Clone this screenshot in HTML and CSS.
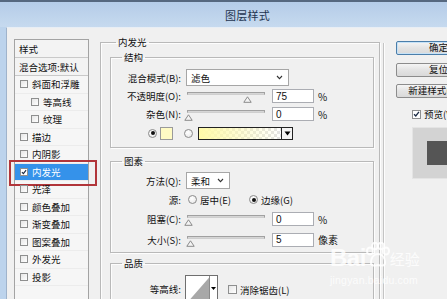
FILE: index.html
```html
<!DOCTYPE html>
<html lang="zh-CN">
<head>
<meta charset="utf-8">
<title>图层样式</title>
<link rel="stylesheet" href="styles.css">
</head>
<body>
<div class="titlebar"><span class="title">图层样式</span></div>
<div class="frame">
  <div class="content">
    <div class="stylelist">
      <div class="hdr">样式</div>
      <div class="hdr">混合选项:默认</div>
      <div class="item"><span class="cb"></span>斜面和浮雕</div>
      <div class="item sub"><span class="cb"></span>等高线</div>
      <div class="item sub"><span class="cb"></span>纹理</div>
      <div class="item"><span class="cb"></span>描边</div>
      <div class="item"><span class="cb"></span>内阴影</div>
      <div class="item selected"><span class="cb checked"><svg viewBox="0 0 8 8" width="8" height="8"><path d="M1.2 4.2 L3.2 6.2 L6.8 1.6" fill="none" stroke="#1a2a44" stroke-width="1.5"/></svg></span>内发光<span class="mark"></span></div>
      <div class="item"><span class="cb"></span>光泽</div>
      <div class="item"><span class="cb"></span>颜色叠加</div>
      <div class="item"><span class="cb"></span>渐变叠加</div>
      <div class="item"><span class="cb"></span>图案叠加</div>
      <div class="item"><span class="cb"></span>外发光</div>
      <div class="item"><span class="cb"></span>投影</div>
    </div>

    <fieldset class="group outer">
      <legend>内发光</legend>

      <fieldset class="group inner g-struct">
        <legend>结构</legend>
        <div class="row r19">
          <span class="lbl">混合模式(B):</span>
          <span class="select w-blend">滤色<svg class="chev" viewBox="0 0 7 5" width="7" height="5"><path d="M1 1 L3.5 3.6 L6 1" fill="none" stroke="#333" stroke-width="1.1"/></svg></span>
        </div>
        <div class="row r18">
          <span class="lbl">不透明度(O):</span>
          <span class="slider"><span class="track"></span><svg class="thumb" style="left:75%" viewBox="0 0 9 7" width="9" height="7"><path d="M4.5 0.8 L8.2 6.3 L0.8 6.3 Z" fill="#f4f4f4" stroke="#8a8a8a" stroke-width="1"/></svg></span>
          <span class="num">75</span><span class="unit">%</span>
        </div>
        <div class="row r18">
          <span class="lbl">杂色(N):</span>
          <span class="slider"><span class="track"></span><svg class="thumb" style="left:0%" viewBox="0 0 9 7" width="9" height="7"><path d="M4.5 0.8 L8.2 6.3 L0.8 6.3 Z" fill="#f4f4f4" stroke="#8a8a8a" stroke-width="1"/></svg></span>
          <span class="num">0</span><span class="unit">%</span>
        </div>
        <div class="row r20 colorrow">
          <span class="radio on"></span>
          <span class="swatch"></span>
          <span class="radio r-grad"></span>
          <span class="gradient"><span class="gfill"></span><span class="gbtn"><svg viewBox="0 0 7 5" width="7" height="5"><path d="M0.5 0.5 L6.5 0.5 L3.5 4.5 Z" fill="#000"/></svg></span></span>
        </div>
      </fieldset>

      <fieldset class="group inner g-elem">
        <legend>图素</legend>
        <div class="row r19">
          <span class="lbl">方法(Q):</span>
          <span class="select w-method">柔和<svg class="chev" viewBox="0 0 7 5" width="7" height="5"><path d="M1 1 L3.5 3.6 L6 1" fill="none" stroke="#333" stroke-width="1.1"/></svg></span>
        </div>
        <div class="row r19">
          <span class="lbl">源:</span>
          <span class="radio r-src"></span><span class="rtext">居中(E)</span>
          <span class="radio on r-src2"></span><span class="rtext">边缘(G)</span>
        </div>
        <div class="row r20">
          <span class="lbl">阻塞(C):</span>
          <span class="slider"><span class="track"></span><svg class="thumb" style="left:0%" viewBox="0 0 9 7" width="9" height="7"><path d="M4.5 0.8 L8.2 6.3 L0.8 6.3 Z" fill="#f4f4f4" stroke="#8a8a8a" stroke-width="1"/></svg></span>
          <span class="num">0</span><span class="unit">%</span>
        </div>
        <div class="row r21">
          <span class="lbl">大小(S):</span>
          <span class="slider"><span class="track"></span><svg class="thumb" style="left:2%" viewBox="0 0 9 7" width="9" height="7"><path d="M4.5 0.8 L8.2 6.3 L0.8 6.3 Z" fill="#f4f4f4" stroke="#8a8a8a" stroke-width="1"/></svg></span>
          <span class="num">5</span><span class="unit">像素</span>
        </div>
      </fieldset>

      <fieldset class="group inner g-qual">
        <legend>品质</legend>
        <div class="row qrow">
          <span class="lbl">等高线:</span>
          <span class="contour"><span class="cthumb"><svg viewBox="0 0 23 30" width="23" height="30" preserveAspectRatio="none"><path d="M0 30 L23 2 L23 30 Z" fill="#a8a8a8"/></svg></span><span class="cbtn"><svg viewBox="0 0 5 3" width="5" height="3"><path d="M0 0 L5 0 L2.5 3 Z" fill="#000"/></svg></span></span>
          <span class="cb aa"></span><span class="rtext">消除锯齿(L)</span>
        </div>
      </fieldset>
    </fieldset>

    <div class="divider"></div>

    <div class="side">
      <div class="btn default">确定</div>
      <div class="btn b2">复位</div>
      <div class="btn b3">新建样式(W)...</div>
      <div class="preview-check"><span class="cb checked"><svg viewBox="0 0 8 8" width="8" height="8"><path d="M1.2 4.2 L3.2 6.2 L6.8 1.6" fill="none" stroke="#1a2a44" stroke-width="1.5"/></svg></span>预览(V)</div>
      <div class="preview"><span class="pv-square"></span></div>
    </div>
  </div>
</div>

<div class="watermark">
  <div class="wm-top"><span class="wm-bai">Bai</span><svg class="wm-paw" viewBox="0 0 26 26" width="26" height="26"><g fill="none" stroke="rgba(255,255,255,0.85)" stroke-width="2"><ellipse cx="6" cy="9" rx="3" ry="3.6"/><ellipse cx="11" cy="4" rx="2.8" ry="3.3"/><ellipse cx="17" cy="4" rx="2.8" ry="3.3"/><ellipse cx="22" cy="9" rx="3" ry="3.6"/><path d="M7 21 C7 14 11 12 14 12 C17 12 21 14 21 21 C21 24 18 24 14 23 C10 24 7 24 7 21 Z"/></g></svg><span class="wm-jy">经验</span></div>
  <div class="wm-url">jingyan.baidu.com</div>
</div>
</body>
</html>
```

FILE: styles.css
```css
* { box-sizing: border-box; margin: 0; padding: 0; }
html, body { width: 447px; height: 299px; overflow: hidden; }
body {
  font-family: "Noto Sans CJK SC", "Liberation Sans", sans-serif;
  font-size: 9.5px;
  color: #111;
  background: #bcd3ec;
  position: relative;
}

.titlebar {
  height: 27px;
  border-top: 2px solid #56687f;
  background: linear-gradient(#b5cce8, #c6daef);
  display: flex;
  justify-content: center;
  align-items: center;
  padding-left: 48px;
}
.title { font-size: 11px; color: #1e3450; letter-spacing: 0.3px; }

.frame { height: 272px; padding-left: 6px; display: flex; }
.content {
  flex: 1;
  background: #f0f0f0;
  border-left: 1px solid #9fb3cb;
  border-top: 1px solid #e8eef5;
  display: flex;
  align-items: flex-start;
  overflow: hidden;
}

/* style list */
.stylelist {
  margin: 11px 0 0 7px;
  width: 75px;
  height: 270px;
  flex: none;
  border: 1px solid #a3a3a3;
  background: #f6f6f6;
}
.hdr {
  height: 18px;
  border-bottom: 1px solid #c9c9c9;
  padding-left: 4px;
  display: flex;
  align-items: center;
  background: #f3f3f3;
}
.item {
  height: 17.5px;
  display: flex;
  align-items: center;
  padding-left: 5px;
  border-bottom: 1px solid #ececec;
  position: relative;
}
.item.sub { padding-left: 16px; }
.cb {
  width: 8px;
  height: 8px;
  border: 1px solid #8e8f8f;
  background: linear-gradient(135deg, #e6e6e6, #ffffff);
  margin-right: 4px;
  flex: none;
  display: inline-flex;
  align-items: center;
  justify-content: center;
}
.cb.checked { background: #fff; }
.cb svg { display: block; }
.item.selected { background: #3592ea; color: #fff; }
.mark {
  position: absolute;
  left: -6px;
  top: -4px;
  right: -9px;
  bottom: -6px;
  border: 2px solid #b1353a;
}

/* fieldsets */
.group {
  border: 1px solid #b9b9b9;
  box-shadow: inset 1px 1px 0 #fdfdfd, 1px 1px 0 #fdfdfd;
}
.group legend {
  line-height: 12px;
  padding: 0 2px;
}
.outer {
  margin: 8px 0 0 11px;
  width: 280px;
  height: 300px;
  padding: 3px 5px 0 9px;
  flex: none;
}
.outer > legend { margin-left: 6px; }
.inner { width: 264px; padding: 0; }
.inner > legend { margin-left: 11px; }
.g-struct { padding: 5px 0 4px 0; }
.g-elem { margin-top: 7px; padding: 4px 0 2px 0; }
.g-qual { margin-top: 4px; padding: 6px 0 0 0; height: 60px; }

.row { display: flex; align-items: center; }
.r18 { height: 18px; }
.r19 { height: 19px; }
.r20 { height: 20px; }
.r21 { height: 21px; }
.lbl { width: 70px; text-align: right; margin-right: 5px; flex: none; white-space: nowrap; }

.select {
  height: 17px;
  border: 1px solid #a6a6a6;
  background: #fff;
  display: flex;
  align-items: center;
  justify-content: space-between;
  padding: 0 5px 0 4px;
}
.w-blend { width: 103px; }
.w-method { width: 44px; }
.chev { display: block; }

.slider { position: relative; width: 78px; height: 18px; margin-left: 1px; flex: none; }
.track {
  display: block;
  margin-top: 5px;
  height: 3px;
  border: 1px solid #a1a1a1;
  border-bottom-color: #cfcfcf;
  background: #d6d6d6;
}
.thumb { position: absolute; top: 9px; margin-left: -3px; display: block; }

.num {
  margin-left: 7px;
  width: 42px;
  height: 14px;
  border: 1px solid #abadb3;
  background: #fff;
  padding-left: 3px;
  display: flex;
  align-items: center;
  font-size: 10px;
  font-family: "Liberation Sans", sans-serif;
}
.unit { margin-left: 4px; font-size: 10px; }

.colorrow { padding-left: 37px; }
.radio {
  width: 9px;
  height: 9px;
  border-radius: 50%;
  border: 1px solid #8b8b8b;
  background: radial-gradient(circle at 40% 35%, #fff, #e4e4e4);
  flex: none;
  display: inline-block;
  position: relative;
}
.radio.on::after {
  content: "";
  position: absolute;
  left: 1.5px;
  top: 1.5px;
  width: 4px;
  height: 4px;
  border-radius: 50%;
  background: #111;
}
.swatch {
  margin-left: 3px;
  width: 13px;
  height: 13px;
  border: 1px solid #9a9a9a;
  background: #fffbc4;
}
.r-grad { margin-left: 11px; }
.gradient {
  margin-left: 5px;
  width: 95px;
  height: 13px;
  border: 1px solid #222;
  display: flex;
  background-color: #fff;
  background-image:
    linear-gradient(45deg, #e4e4e4 25%, transparent 25%, transparent 75%, #e4e4e4 75%),
    linear-gradient(45deg, #e4e4e4 25%, transparent 25%, transparent 75%, #e4e4e4 75%);
  background-size: 6px 6px;
  background-position: 0 0, 3px 3px;
}
.gfill { flex: 1; background: linear-gradient(90deg, #fffaa8, rgba(255, 250, 170, 0)); }
.gbtn {
  width: 11px;
  border-left: 1px solid #222;
  background: #f4f4f4;
  display: flex;
  align-items: center;
  justify-content: center;
}
.gbtn svg { display: block; }

.r-src { margin-left: 2px; }
.rtext { margin-left: 3px; white-space: nowrap; }
.r-src2 { margin-left: 18px; }

.qrow { align-items: flex-start; height: 40px; }
.qrow .lbl { margin-top: 7px; }
.contour {
  margin-left: -1px;
  width: 33px;
  height: 30px;
  border: 1px solid #6f6f6f;
  background: #fff;
  display: flex;
}
.cthumb { width: 23px; height: 100%; overflow: hidden; }
.cthumb svg { display: block; width: 100%; height: 100%; }
.cbtn {
  flex: 1;
  border-left: 1px solid #8a8a8a;
  display: flex;
  align-items: center;
  justify-content: center;
  padding-bottom: 4px;
}
.cbtn svg { display: block; }
.cb.aa { margin-left: 10px; margin-top: 10px; width: 9px; height: 9px; margin-right: 0; }
.qrow .rtext { margin-top: 8px; }

.divider {
  width: 1px;
  height: 300px;
  margin: 15px 0 0 3px;
  background: #c4c4c4;
  box-shadow: 1px 0 0 #fdfdfd;
  flex: none;
}

.side { margin: 13px 0 0 12px; width: 90px; flex: none; }
.btn {
  width: 85px;
  height: 14px;
  border: 1px solid #8c8c8c;
  border-radius: 2px;
  background: linear-gradient(#f5f5f5, #e3e3e3 50%, #d9d9d9);
  display: flex;
  align-items: center;
  justify-content: center;
  line-height: 1;
}
.btn.default { border-color: #4b7eaa; box-shadow: inset 0 0 0 1px #c6e2f7; }
.b2 { margin-top: 8px; }
.b3 { margin-top: 7px; }
.preview-check { margin: 9px 0 0 16px; display: flex; align-items: center; }
.preview-check .cb { width: 9px; height: 9px; margin-right: 3px; }
.preview {
  margin: 6px 0 0 16px;
  width: 60px;
  height: 52px;
  background: #d3d3d3;
  border: 1px solid #e4e4e4;
  display: flex;
  align-items: center;
  padding-left: 14px;
}
.pv-square { width: 32px; height: 24px; background: #555; display: block; }

/* watermark overlay */
.watermark {
  position: absolute;
  left: 330px;
  top: 244px;
  color: rgba(255, 255, 255, 0.82);
  pointer-events: none;
}
.wm-top { display: flex; align-items: center; height: 28px; }
.wm-bai { font-family: "Liberation Sans", sans-serif; font-weight: bold; font-size: 24px; letter-spacing: -0.5px; }
.wm-paw { display: block; margin: -6px -1px 0 -2px; }
.wm-jy { font-size: 15px; margin-left: 1px; }
.wm-url { font-family: "Liberation Sans", sans-serif; font-size: 10.5px; margin-top: 2px; letter-spacing: 0.2px; }
```
